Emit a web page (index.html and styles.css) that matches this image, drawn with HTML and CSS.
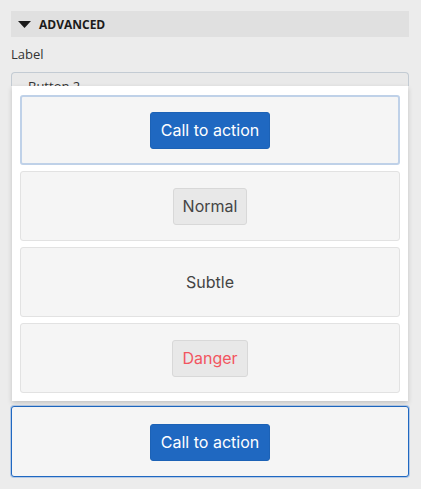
FILE: index.html
```html
<!DOCTYPE html>
<html lang="en">
<head>
    <meta charset="UTF-8">
    <meta name="viewport" content="width=device-width, initial-scale=1.0">
    <title>Advanced</title>
    <link rel="stylesheet" href="styles.css">
</head>
<body>

    <div class="panel">
        <div class="section-header">
            <svg class="caret" width="13" height="7" viewBox="0 0 13 7"><polygon points="0,0 13,0 6.5,7" fill="#1b1b1b"/></svg>
            <span>ADVANCED</span>
        </div>

        <div class="field-label">Label</div>

        <div class="select">
            <span class="select-value">Button 2</span>
        </div>

        <div class="dropdown">
            <div class="option focused">
                <span class="btn btn-primary">Call to action</span>
            </div>
            <div class="option">
                <span class="btn btn-normal">Normal</span>
            </div>
            <div class="option">
                <span class="btn btn-subtle">Subtle</span>
            </div>
            <div class="option">
                <span class="btn btn-danger">Danger</span>
            </div>
        </div>

        <div class="preview">
            <span class="btn btn-primary">Call to action</span>
        </div>
    </div>

</body>
</html>
```

FILE: styles.css
```css
* {
    margin: 0;
    padding: 0;
    box-sizing: border-box;
}

body {
    font-family: 'Open Sans', sans-serif;
    background: #ececec;
    color: #333;
}

.panel {
    padding: 11px 12px 11px 11px;
    display: flex;
    flex-direction: column;
}

.section-header {
    height: 26px;
    background: #e0e0e0;
    display: flex;
    align-items: center;
    gap: 8px;
    padding-left: 7px;
    font-size: 12px;
    font-weight: bold;
    color: #1b1b1b;
}

.caret {
    margin-top: 1px;
}

.field-label {
    font-size: 13px;
    margin-top: 8px;
    line-height: 18px;
}

.select {
    margin-top: 9px;
    height: 14px;
    overflow: hidden;
    border: 1px solid #c3cbd3;
    border-bottom: none;
    border-radius: 4px 4px 0 0;
    background: #e9e9e9;
    padding: 4px 0 0 16px;
    font-size: 13px;
    line-height: 18px;
}

.dropdown {
    margin: 0 1px;
    background: #fff;
    padding: 9px 8px 8px;
    box-shadow: 0 2px 5px rgba(0, 0, 0, 0.18);
    display: flex;
    flex-direction: column;
    gap: 6px;
    position: relative;
}

.option {
    height: 70px;
    background: #f5f5f5;
    border: 1px solid #e2e2e2;
    border-radius: 3px;
    display: flex;
    align-items: center;
    justify-content: center;
}

.option.focused {
    border: 2px solid #bfd1e8;
}

.btn {
    font-family: 'Inter', sans-serif;
    font-size: 16px;
    height: 37px;
    display: inline-flex;
    align-items: center;
    padding: 0 10px;
    border-radius: 3px;
    border: 1px solid transparent;
    color: #444;
}

.btn-primary {
    background: #1f68c1;
    border-color: #1c62b6;
    color: #fff;
}

.btn-normal {
    background: #e8e8e8;
    border-color: #d8d8d8;
    padding: 0 9px;
}

.btn-danger {
    background: #e8e8e8;
    border-color: #d8d8d8;
    color: #f2555f;
    padding: 0 9px;
}

.preview {
    margin-top: 5px;
    height: 71px;
    background: #f5f5f5;
    border: 1px solid #1f68c1;
    border-radius: 3px;
    box-shadow: 0 0 0 1px #b5cae6;
    display: flex;
    align-items: center;
    justify-content: center;
    padding-top: 1px;
}
```
